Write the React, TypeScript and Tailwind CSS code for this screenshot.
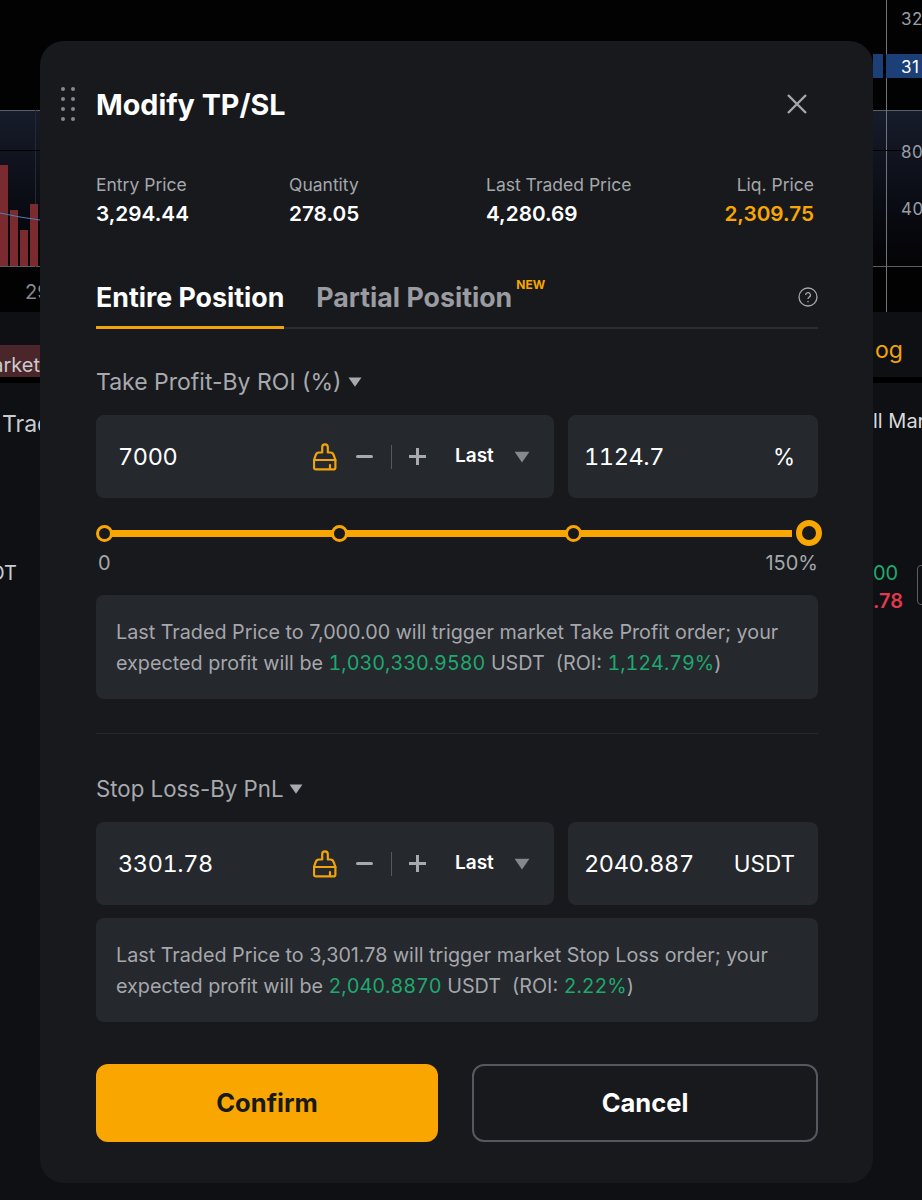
import React from 'react';

const BrushIcon = () => (
  <svg width="24" height="28" viewBox="0 0 24 28" fill="none" stroke="#f0a30a" strokeWidth="2.2" strokeLinejoin="round" strokeLinecap="round">
    <path d="M9.2 9.5V4.2a2.8 2.8 0 0 1 5.6 0v5.3h2.6c2 0 3.2 1.6 3.6 3.4l1.4 4.1v7.4a2 2 0 0 1-2 2H3a2 2 0 0 1-2-2V17l1.4-4.1c.4-1.8 1.6-3.4 3.6-3.4z" />
    <path d="M1.5 17h21" />
    <path d="M17 26v-4" />
  </svg>
);

const Caret = ({ className }: { className: string }) => (
  <svg className={className} viewBox="0 0 14 10" fill="currentColor">
    <path d="M0.5 0.5h13L7 9.8z" />
  </svg>
);

const PriceInput = ({ price, value, unit }: { price: string; value: string; unit: string }) => (
  <div className="flex gap-[14px] text-[23.5px] tabular-nums tracking-[-0.4px] text-white">
    <div className="flex h-[83px] w-[458px] items-center rounded-lg bg-[#25282d] pl-[22px]">
      <span className="w-[195px]">{price}</span>
      <BrushIcon />
      <span className="ml-[19px] h-[3px] w-[17px] rounded-sm bg-[#a7a9ae]" />
      <span className="ml-[18px] h-[24px] w-px bg-[#55585e]" />
      <span className="relative ml-[17px] h-[17px] w-[17px]">
        <span className="absolute left-0 top-[7px] h-[3px] w-[17px] bg-[#a7a9ae]" />
        <span className="absolute left-[7px] top-0 h-[17px] w-[3px] bg-[#a7a9ae]" />
      </span>
      <span className="ml-[29px] text-[19px] font-semibold tracking-normal">Last</span>
      <Caret className="ml-[20px] h-[12px] w-[16px] text-[#85888e]" />
    </div>
    <div className="flex h-[83px] w-[250px] items-center justify-between rounded-lg bg-[#25282d] pl-4 pr-[23px]">
      <span>{value}</span>
      <span className="text-[22.5px] tracking-normal">{unit}</span>
    </div>
  </div>
);

const Green = ({ children }: { children: React.ReactNode }) => (
  <span className="tabular-nums text-[#1fa96f]">{children}</span>
);

const InfoBox = ({ children }: { children: React.ReactNode }) => (
  <div className="flex h-[104px] items-center rounded-lg bg-[#25282d] px-5 pt-[2px] text-[19.75px] leading-[31px] text-[#a5a7ab]">
    <p>{children}</p>
  </div>
);

const SliderDot = ({ big, className }: { big?: boolean; className?: string }) => (
  <span
    className={
      (big
        ? 'relative h-[26px] w-[26px] rounded-full border-[6px] border-[#f9a600] bg-[#17191d] '
        : 'relative h-[17px] w-[17px] rounded-full border-[3.5px] border-[#f9a600] bg-[#17191d] ') + (className || '')
    }
  />
);

const Stat = ({ label, value, color }: { label: string; value: string; color?: string }) => (
  <div>
    <div className="text-[17.5px] leading-[26px] text-[#a5a7ab]">{label}</div>
    <div className={`mt-[2px] text-[20.75px] font-semibold leading-[28px] ${color || 'text-white'}`}>{value}</div>
  </div>
);

// trading screen that sits behind the dialog
const Backdrop = () => (
  <div className="absolute inset-0 overflow-hidden bg-[#0e1013] text-[20px]">
    <div className="absolute left-0 top-0 h-[312px] w-full bg-[#020203]" />
    <div className="absolute left-0 top-[110px] h-[157px] w-full border-y border-[#5b5e64] bg-gradient-to-b from-[#171c2b] to-[#040406]" />
    <div className="absolute left-[886px] top-0 h-[312px] w-px bg-[#70737a]" />
    <div className="absolute left-[35px] top-[110px] h-[157px] w-px bg-[#26282d]" />
    <div className="absolute left-0 top-[150px] h-px w-full bg-[#000]" />

    <div className="absolute left-0 top-[165px] h-[101px] w-2 bg-[#7b2a2f]" />
    <div className="absolute left-[10px] top-[210px] h-[56px] w-2 bg-[#7b2a2f]" />
    <div className="absolute left-[20px] top-[230px] h-[36px] w-2 bg-[#7b2a2f]" />
    <div className="absolute left-[30px] top-[204px] h-[62px] w-2 bg-[#7b2a2f]" />
    <svg className="absolute left-0 top-[205px]" width="40" height="20" fill="none" stroke="#4d7fb5" strokeWidth="1">
      <path d="M0 8L20 12L40 15" />
    </svg>

    <span className="absolute left-[25px] top-[277px] text-[#85888e]">29</span>
    <span className="absolute left-[901px] top-[7px] text-[17px] tracking-wide text-[#9a9da3]">32</span>
    <div className="absolute left-[873px] top-[54px] h-6 w-[10px] bg-[#1c3f77]" />
    <div className="absolute left-[886px] top-[54px] h-6 w-9 bg-[#1c3f77]" />
    <span className="absolute left-[901px] top-[55px] text-[17px] tracking-wide text-white">31</span>
    <span className="absolute left-[901px] top-[140px] text-[17px] tracking-wide text-[#9a9da3]">80</span>
    <span className="absolute left-[901px] top-[197px] text-[17px] tracking-wide text-[#9a9da3]">40</span>

    <div className="absolute left-0 top-[345px] h-[32px] w-10 bg-[#4a2529]" />
    <div className="absolute left-0 top-[377px] h-[6px] w-full bg-[#000]" />
    <span className="absolute right-[882px] top-[350px] whitespace-nowrap text-[#c9cbd0]">Market</span>
    <span className="absolute left-[875px] top-[333px] text-[23px] text-[#f0a30a]">og</span>
    <span className="absolute left-[2px] top-[407px] text-[23px] text-[#c9cbd0]">Trad</span>
    <span className="absolute left-[873px] top-[406px] whitespace-nowrap text-[20px] text-[#d8dadd]">ll Market</span>
    <span className="absolute right-[905px] top-[558px] text-[#c9cbd0]">USDT</span>
    <span className="absolute left-[873px] top-[558px] text-[#1fa96f]">00</span>
    <span className="absolute left-[873px] top-[586px] font-semibold text-[#e0394d]">.78</span>
    <div className="absolute left-[917px] top-[565px] h-10 w-5 rounded-l border border-[#5b5e64]" />
  </div>
);

export default function App() {
  return (
    <div className="relative h-[1200px] w-[922px] overflow-hidden font-['Inter',sans-serif]">
      <Backdrop />
      <div className="relative pl-10 pt-[41px]">
        <div className="h-[1142px] w-[833px] rounded-[24px] bg-[#17191d] pl-[56px] pr-[55px]">
          {/* header */}
          <div className="relative flex h-[128px] items-center">
            <div className="absolute left-[-35px] top-[46px] grid grid-cols-2 gap-x-[6px] gap-y-[6px]">
              {[0, 1, 2, 3, 4, 5, 6, 7].map((i) => (
                <span key={i} className="h-[4px] w-[4px] rounded-full bg-[#85888e]" />
              ))}
            </div>
            <h1 className="text-[28.7px] font-bold text-white">Modify TP/SL</h1>
            <svg className="absolute right-[9px] top-[51px]" width="24" height="24" viewBox="0 0 24 24" fill="none" stroke="#a5a7ab" strokeWidth="2.4">
              <path d="M3 3l18 18M21 3L3 21" />
            </svg>
          </div>

          {/* position stats */}
          <div className="mt-[3px] grid w-[718px] grid-cols-[193px_197px_1fr_auto]">
            <Stat label="Entry Price" value="3,294.44" />
            <Stat label="Quantity" value="278.05" />
            <Stat label="Last Traded Price" value="4,280.69" />
            <div className="text-right">
              <Stat label="Liq. Price" value="2,309.75" color="text-[#f9a600]" />
            </div>
          </div>

          {/* tabs */}
          <div className="relative mt-[48px] flex h-[53px] items-start gap-[32px] border-b-2 border-[#2a2c31] text-[26.75px] font-bold leading-[42px]">
            <div className="relative h-[53px] border-b-[3px] border-[#f0a30a] text-white">Entire Position</div>
            <div className="relative text-[#9a9ca2]">
              Partial Position
              <span className="absolute left-[100%] top-[-12px] ml-1 text-[12px] font-bold text-[#f9a600]">NEW</span>
            </div>
            <svg className="absolute right-0 top-[11px]" width="20" height="20" viewBox="0 0 20 20" fill="none" stroke="#a5a7ab" strokeWidth="1.3">
              <circle cx="10" cy="10" r="9" />
              <path d="M7.6 8a2.4 2.4 0 1 1 3.4 2.2c-.7.4-1 .8-1 1.8" />
              <path d="M10 14v1.2" />
            </svg>
          </div>

          {/* take profit */}
          <div className="mt-[36px] flex h-[34px] items-center gap-[7px] text-[23px] text-[#a7a9ae]">
            Take Profit-By ROI (%)
            <Caret className="h-[10px] w-[14px]" />
          </div>
          <div className="mt-[16px]">
            <PriceInput price="7000" value="1124.7" unit="%" />
          </div>

          <div className="relative mt-[22px] flex h-[26px] w-[726px] items-center">
            <div className="absolute left-[8px] top-[10px] h-[7px] w-[688px] bg-[#f9a600]" />
            <SliderDot />
            <SliderDot className="ml-[217.5px]" />
            <SliderDot className="ml-[217px]" />
            <SliderDot big className="ml-[214.5px]" />
          </div>
          <div className="mt-[3px] flex h-[28px] items-center justify-between px-[2px] text-[20px] text-[#a5a7ab]">
            <span>0</span>
            <span className="mr-[-2px]">150%</span>
          </div>

          <div className="mt-[18px]">
            <InfoBox>
              Last Traded Price to 7,000.00 will trigger market Take Profit order; your
              <br />
              expected profit will be <Green>1,030,330.9580</Green> USDT&nbsp; (ROI: <Green>1,124.79%</Green>)
            </InfoBox>
          </div>

          <div className="mt-[34px] h-px bg-[#26282d]" />

          {/* stop loss */}
          <div className="mt-[38px] flex h-[34px] items-center gap-[6px] text-[22.25px] text-[#a7a9ae]">
            Stop Loss-By PnL
            <Caret className="h-[10px] w-[14px]" />
          </div>
          <div className="mt-[16px]">
            <PriceInput price="3301.78" value="2040.887" unit="USDT" />
          </div>
          <div className="mt-[13px]">
            <InfoBox>
              Last Traded Price to 3,301.78 will trigger market Stop Loss order; your
              <br />
              expected profit will be <Green>2,040.8870</Green> USDT&nbsp; (ROI: <Green>2.22%</Green>)
            </InfoBox>
          </div>

          {/* actions */}
          <div className="mt-[42px] flex gap-[34px] text-[25.5px] font-bold">
            <button className="h-[78px] w-[342px] rounded-xl bg-[#f9a600] text-[#17191d]">Confirm</button>
            <button className="h-[78px] w-[346px] rounded-xl border-2 border-[#55585e] text-white">Cancel</button>
          </div>
        </div>
      </div>
    </div>
  );
}
